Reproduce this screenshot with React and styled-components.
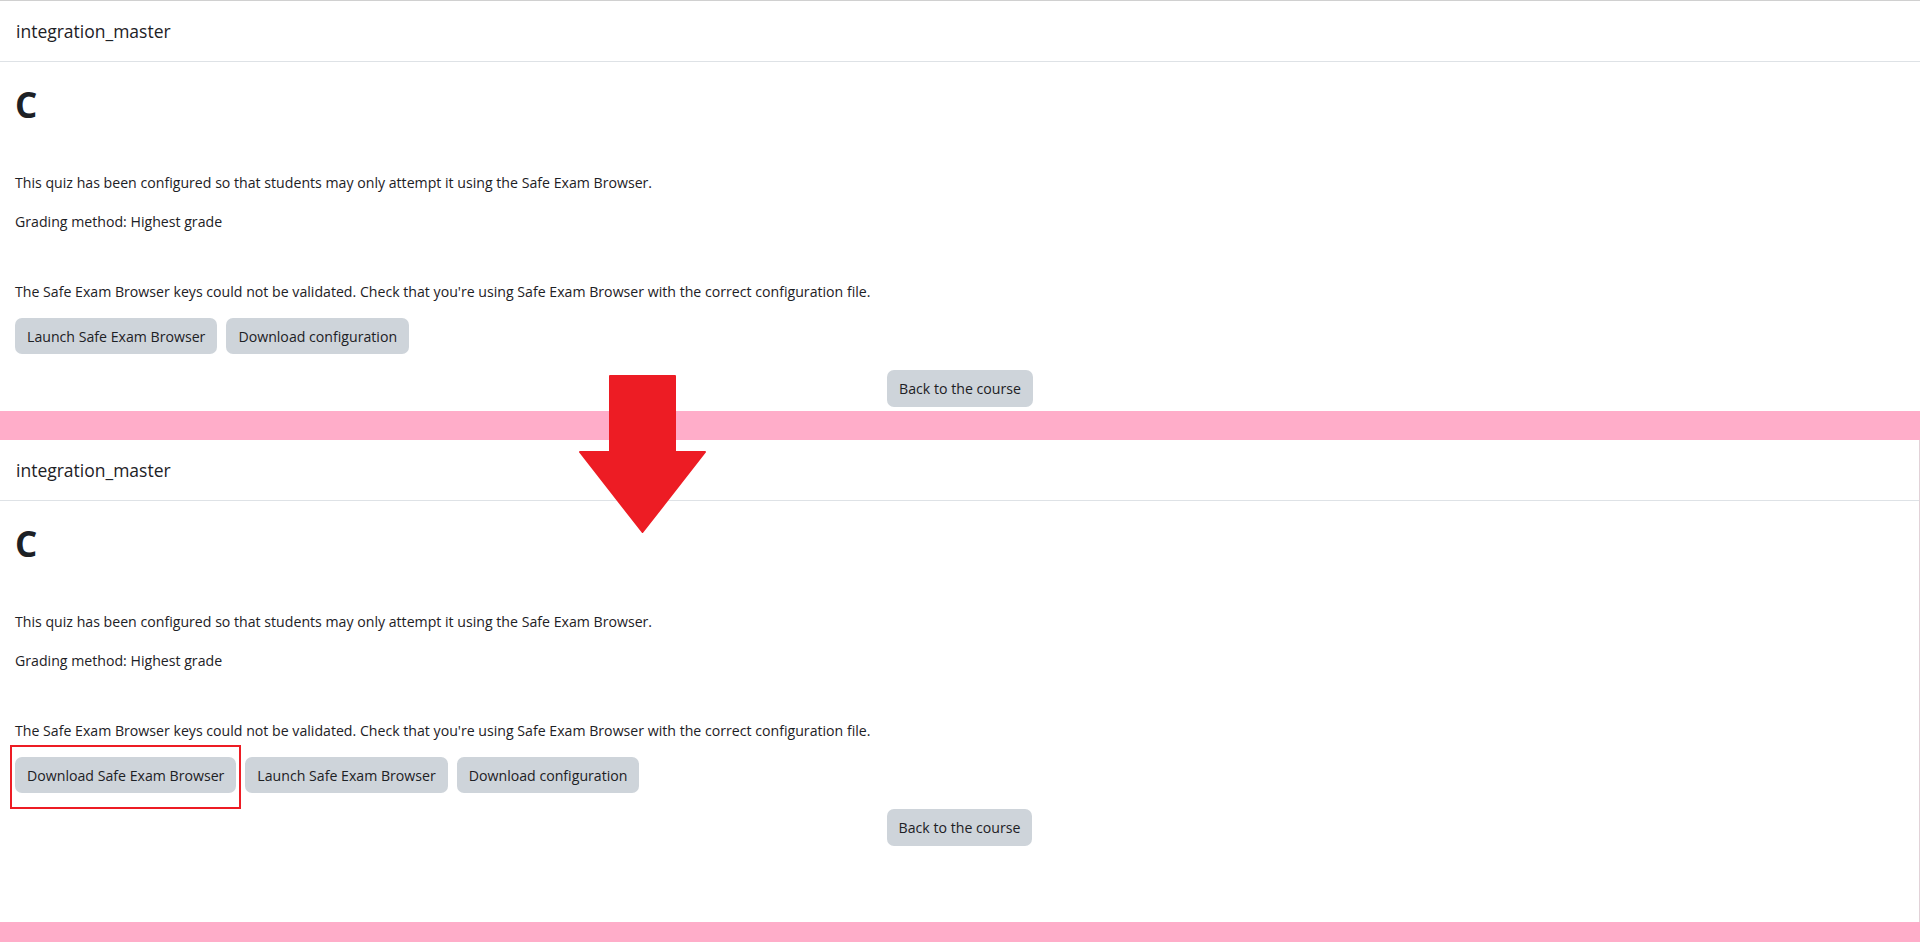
import React from "react";
import styled, { createGlobalStyle } from "styled-components";

const GlobalStyle = createGlobalStyle`
  html, body {
    margin: 0;
    padding: 0;
    background: #ffffff;
  }
  body {
    font-family: "Open Sans", "Noto Sans", Arial, sans-serif;
    color: #1d2125;
  }
`;

const Page = styled.div`
  position: relative;
  width: 1920px;
  height: 942px;
  overflow: hidden;
  background: #ffffff;
`;

const Panel = styled.section`
  background: #ffffff;
  border-top: ${(props) => (props.$topLine ? "1px solid #d0d0d0" : "none")};
  border-right: ${(props) => (props.$sideLine ? "1px solid #e2d2d8" : "none")};
  padding-bottom: ${(props) => props.$bottomSpace}px;
`;

const Band = styled.div`
  height: ${(props) => props.$height}px;
  background: #ffadc9;
`;

const Header = styled.header`
  height: 60px;
  display: flex;
  align-items: center;
  padding-left: 16px;
  border-bottom: 1px solid #dee2e6;
  font-size: 17.5px;
  color: #1d2125;
`;

const Content = styled.div`
  padding: 0 15px;
`;

const Title = styled.h2`
  margin: 22px 0 46px;
  font-size: 35px;
  line-height: 42px;
  font-weight: 700;
`;

const Text = styled.p`
  margin: 0 0 17px;
  font-size: 14.15px;
  line-height: 22px;
`;

const Notice = styled.div`
  margin-top: 48px;

  & > p {
    margin-bottom: 15px;
  }
`;

const ButtonRow = styled.div`
  display: flex;
  gap: 9px;
`;

const Button = styled.button`
  position: relative;
  height: ${(props) => (props.$tall ? 37 : 36)}px;
  padding: 0 12px;
  border: none;
  border-radius: 7px;
  background: #ced4da;
  color: #1d2125;
  font-family: "Open Sans", "Noto Sans", Arial, sans-serif;
  font-size: 14.15px;
  cursor: pointer;
`;

const Highlight = styled.span`
  position: absolute;
  left: -5px;
  right: -5px;
  top: -12px;
  bottom: -16px;
  border: 2px solid #ed1c24;
  pointer-events: none;
`;

const Centered = styled.div`
  display: flex;
  justify-content: center;
  margin-top: 16px;
`;

const ArrowMark = styled.svg`
  position: absolute;
  left: 579px;
  top: 375px;
  width: 127px;
  height: 158px;
`;

const QuizView = ({ withDownload }) => (
  <>
    <Header>integration_master</Header>
    <Content>
      <Title>C</Title>
      <Text>
        This quiz has been configured so that students may only attempt it
        using the Safe Exam Browser.
      </Text>
      <Text>Grading method: Highest grade</Text>
      <Notice>
        <Text>
          The Safe Exam Browser keys could not be validated. Check that
          you're using Safe Exam Browser with the correct configuration file.
        </Text>
        <ButtonRow>
          {withDownload && (
            <Button>
              Download Safe Exam Browser
              <Highlight />
            </Button>
          )}
          <Button>Launch Safe Exam Browser</Button>
          <Button>Download configuration</Button>
        </ButtonRow>
      </Notice>
      <Centered>
        <Button $tall>Back to the course</Button>
      </Centered>
    </Content>
  </>
);

const App = () => (
  <>
    <GlobalStyle />
    <Page>
      <Panel $topLine $bottomSpace={4}>
        <QuizView />
      </Panel>
      <Band $height={29} />
      <Panel $sideLine $bottomSpace={76}>
        <QuizView withDownload />
      </Panel>
      <Band $height={21} />
      <ArrowMark viewBox="0 0 127 158">
        <path
          d="M31 1 H96 V77 H126 L63.5 157 L1 77 H31 Z"
          fill="#ed1c24"
          stroke="#ed1c24"
          strokeWidth="2"
          strokeLinejoin="round"
        />
      </ArrowMark>
    </Page>
  </>
);

export default App;
